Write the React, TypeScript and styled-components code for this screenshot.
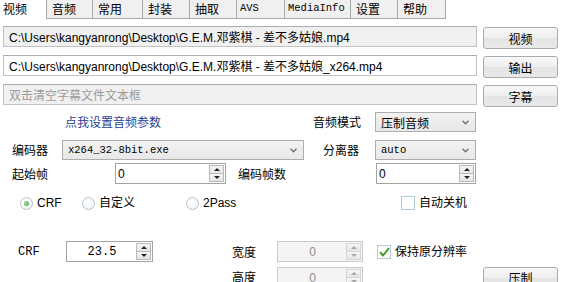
import React from "react";
import styled, { createGlobalStyle, css } from "styled-components";

const CJK = `"Noto Sans CJK SC", sans-serif`;
const SANS = `"Liberation Sans", "Noto Sans CJK SC", sans-serif`;
const MONO = `"Liberation Mono", "Noto Sans CJK SC", monospace`;

const Global = createGlobalStyle`
  html, body { margin: 0; padding: 0; background: #fff; }
  body { font-family: ${CJK}; font-size: 12px; color: #000; }
`;

const Window = styled.div`
  width: 568px;
  height: 282px;
  overflow: hidden;
  background: #fff;
  display: flex;
  flex-direction: column;
`;

const TabBar = styled.div`
  display: flex;
  height: 19px;
  flex: none;
`;

const Tab = styled.div<{ $w: number; $active?: boolean; $mono?: boolean; $last?: boolean }>`
  width: ${(p) => p.$w}px;
  height: 19px;
  box-sizing: border-box;
  display: flex;
  align-items: center;
  padding-left: ${(p) => (p.$active ? 3 : p.$mono ? 3 : 5)}px;
  padding-bottom: 1px;
  font-family: ${(p) => (p.$mono ? MONO : CJK)};
  font-size: ${(p) => (p.$mono ? "10.5px" : "12px")};
  line-height: 1;
  white-space: nowrap;
  ${(p) =>
    p.$active
      ? css`
          background: #fff;
        `
      : css`
          background: #f0f0f0;
          border-left: 1px solid #a9a9a9;
          border-bottom: 1px solid #a9a9a9;
          ${p.$last ? "border-right: 1px solid #a9a9a9;" : ""}
        `}
`;

const Row = styled.div<{ $mt: number; $h: number }>`
  display: flex;
  align-items: center;
  flex: none;
  margin-top: ${(p) => p.$mt}px;
  height: ${(p) => p.$h}px;
`;

const PathRow = styled(Row)`
  align-items: flex-start;
  padding-left: 3px;
`;

const Field = styled.div<{ $readonly?: boolean; $placeholder?: boolean }>`
  width: 474px;
  height: 21px;
  box-sizing: border-box;
  border: 1px solid #c2c2c2;
  border-top-color: #abadb3;
  background: ${(p) => (p.$readonly ? "#f0f0f0" : "#fff")};
  padding-left: 5px;
  display: flex;
  align-items: center;
  font-family: ${SANS};
  font-size: 12px;
  color: ${(p) => (p.$placeholder ? "#9b9b9b" : "#000")};
  white-space: nowrap;
  overflow: hidden;
`;

const Button = styled.div<{ $ml?: number }>`
  width: 75px;
  height: 22px;
  box-sizing: border-box;
  margin-left: ${(p) => p.$ml ?? 6}px;
  margin-top: 1px;
  border: 1px solid #acacac;
  border-radius: 3px;
  background: linear-gradient(#f8f8f8, #eeeeee 50%, #e4e4e4 51%, #e9e9e9);
  display: flex;
  align-items: center;
  justify-content: center;
  font-family: ${CJK};
  font-size: 12px;
  color: #000;
  flex: none;
`;

const Label = styled.div<{ $w: number; $ml?: number; $right?: boolean; $mono?: boolean }>`
  flex: none;
  width: ${(p) => p.$w}px;
  margin-left: ${(p) => p.$ml ?? 0}px;
  box-sizing: border-box;
  text-align: ${(p) => (p.$right ? "right" : "left")};
  padding-right: ${(p) => (p.$right ? 16 : 0)}px;
  font-family: ${(p) => (p.$mono ? MONO : CJK)};
  font-size: 12px;
  white-space: nowrap;
  line-height: 1;
`;

const LinkText = styled(Label)`
  color: #1f3f95;
`;

const SelectBox = styled.div<{ $w: number; $mono?: boolean }>`
  flex: none;
  width: ${(p) => p.$w}px;
  height: 20px;
  box-sizing: border-box;
  border: 1px solid #adadad;
  background: linear-gradient(#f2f2f2, #e8e8e8);
  display: flex;
  align-items: center;
  justify-content: space-between;
  padding: 0 6px 0 5px;
  font-family: ${(p) => (p.$mono ? MONO : CJK)};
  font-size: ${(p) => (p.$mono ? "10.5px" : "12px")};
  white-space: nowrap;
`;

const Chevron = () => (
  <svg width="7" height="5" viewBox="0 0 7 5">
    <path d="M0.5 0.8 L3.5 3.8 L6.5 0.8" fill="none" stroke="#707070" strokeWidth="1.3" />
  </svg>
);

const Spin = styled.div<{ $w: number; $mt?: number; $disabled?: boolean }>`
  flex: none;
  align-self: flex-start;
  margin-top: ${(p) => p.$mt ?? 0}px;
  width: ${(p) => p.$w}px;
  height: 21px;
  box-sizing: border-box;
  border: 1px solid ${(p) => (p.$disabled ? "#c9c9c9" : "#a3a3a3")};
  background: ${(p) => (p.$disabled ? "#f4f4f4" : "#fff")};
  display: flex;
  align-items: stretch;
  padding: 1px;
`;

const SpinValue = styled.div<{ $center?: boolean; $mono?: boolean; $disabled?: boolean }>`
  flex: 1;
  display: flex;
  align-items: center;
  justify-content: ${(p) => (p.$center ? "center" : "flex-start")};
  padding-left: ${(p) => (p.$center ? 0 : 1)}px;
  font-family: ${(p) => (p.$mono ? MONO : SANS)};
  font-size: 12px;
  color: ${(p) => (p.$disabled ? "#8d8d8d" : "#000")};
`;

const Arrows = styled.div`
  width: 15px;
  flex: none;
  display: flex;
  flex-direction: column;
`;

const ArrowBtn = styled.div<{ $down?: boolean; $disabled?: boolean }>`
  flex: 1;
  box-sizing: border-box;
  border: 1px solid ${(p) => (p.$disabled ? "#d6d6d6" : "#b9b9b9")};
  ${(p) => (p.$down ? "border-top: none;" : "")}
  background: linear-gradient(#f6f6f6, #e4e4e4);
  display: flex;
  align-items: center;
  justify-content: center;
  &::after {
    content: "";
    width: 0;
    height: 0;
    border-left: 3px solid transparent;
    border-right: 3px solid transparent;
    ${(p) =>
      p.$down
        ? `border-top: 3px solid ${p.$disabled ? "#a8a8a8" : "#222"};`
        : `border-bottom: 3px solid ${p.$disabled ? "#a8a8a8" : "#222"};`}
  }
`;

const SpinBox = ({
  w,
  value,
  center,
  mono,
  disabled,
  mt,
}: {
  w: number;
  value: string;
  center?: boolean;
  mono?: boolean;
  disabled?: boolean;
  mt?: number;
}) => (
  <Spin $w={w} $disabled={disabled} $mt={mt}>
    <SpinValue $center={center} $mono={mono} $disabled={disabled}>
      {value}
    </SpinValue>
    <Arrows>
      <ArrowBtn $disabled={disabled} />
      <ArrowBtn $down $disabled={disabled} />
    </Arrows>
  </Spin>
);

const Option = styled.div<{ $w?: number; $ml?: number }>`
  flex: none;
  display: flex;
  align-items: center;
  gap: 4px;
  width: ${(p) => (p.$w ? `${p.$w}px` : "auto")};
  margin-left: ${(p) => p.$ml ?? 0}px;
  font-family: ${SANS};
  font-size: 12px;
  white-space: nowrap;
  line-height: 1;
`;

const RadioCircle = styled.span<{ $on?: boolean }>`
  width: 13px;
  height: 13px;
  box-sizing: border-box;
  border-radius: 50%;
  border: 1px solid #b9c3cc;
  background: radial-gradient(circle at 40% 40%, #ffffff, #eef1f4);
  display: flex;
  align-items: center;
  justify-content: center;
  &::after {
    content: "";
    display: ${(p) => (p.$on ? "block" : "none")};
    width: 5px;
    height: 5px;
    border-radius: 50%;
    background: radial-gradient(circle at 40% 40%, #a8d7a0, #4f9d4a);
  }
`;

const CheckSquare = styled.span`
  width: 14px;
  height: 14px;
  box-sizing: border-box;
  border: 1px solid #b3cbd6;
  background: #fff;
  display: flex;
  align-items: center;
  justify-content: center;
`;

const CheckMark = () => (
  <svg width="11" height="10" viewBox="0 0 11 10">
    <path d="M1 5.2 L4 8.5 L10 1" fill="none" stroke="#3f9b25" strokeWidth="2" strokeLinejoin="round" />
  </svg>
);

const tabs: { label: string; w: number; mono?: boolean }[] = [
  { label: "音频", w: 46 },
  { label: "常用", w: 50 },
  { label: "封装", w: 47 },
  { label: "抽取", w: 47 },
  { label: "AVS", w: 48, mono: true },
  { label: "MediaInfo", w: 66, mono: true },
  { label: "设置", w: 47 },
  { label: "帮助", w: 49 },
];

export default function App() {
  return (
    <>
      <Global />
      <Window>
        <TabBar>
          <Tab $w={46} $active>
            视频
          </Tab>
          {tabs.map((t, i) => (
            <Tab key={t.label} $w={t.w} $mono={t.mono} $last={i === tabs.length - 1}>
              {t.label}
            </Tab>
          ))}
        </TabBar>

        <PathRow $mt={7} $h={22}>
          <Field $readonly>C:\Users\kangyanrong\Desktop\G.E.M.邓紫棋 - 差不多姑娘.mp4</Field>
          <Button>视频</Button>
        </PathRow>
        <PathRow $mt={7} $h={22}>
          <Field>C:\Users\kangyanrong\Desktop\G.E.M.邓紫棋 - 差不多姑娘_x264.mp4</Field>
          <Button>输出</Button>
        </PathRow>
        <PathRow $mt={7} $h={22}>
          <Field $readonly $placeholder>
            双击清空字幕文件文本框
          </Field>
          <Button>字幕</Button>
        </PathRow>

        <Row $mt={6} $h={20}>
          <LinkText $ml={65} $w={248}>
            点我设置音频参数
          </LinkText>
          <Label $w={62} $right>
            音频模式
          </Label>
          <SelectBox $w={101}>
            <span>压制音频</span>
            <Chevron />
          </SelectBox>
        </Row>

        <Row $mt={8} $h={20}>
          <Label $ml={12} $w={50}>
            编码器
          </Label>
          <SelectBox $w={242} $mono>
            <span>x264_32-8bit.exe</span>
            <Chevron />
          </SelectBox>
          <Label $w={71} $right>
            分离器
          </Label>
          <SelectBox $w={101} $mono>
            <span>auto</span>
            <Chevron />
          </SelectBox>
        </Row>

        <Row $mt={3} $h={21}>
          <Label $ml={12} $w={103}>
            起始帧
          </Label>
          <SpinBox w={111} value="0" />
          <Label $ml={12} $w={138}>
            编码帧数
          </Label>
          <SpinBox w={100} value="0" />
        </Row>

        <Row $mt={12} $h={14}>
          <Option $ml={20} $w={62}>
            <RadioCircle $on />
            CRF
          </Option>
          <Option $w={104}>
            <RadioCircle />
            自定义
          </Option>
          <Option $w={215}>
            <RadioCircle />
            2Pass
          </Option>
          <Option>
            <CheckSquare />
            自动关机
          </Option>
        </Row>

        <Row $mt={31} $h={21}>
          <Label $ml={18} $w={48} $mono>
            CRF
          </Label>
          <SpinBox w={87} value="23.5" center mono />
          <Label $ml={79} $w={45}>
            宽度
          </Label>
          <SpinBox w={86} value="0" center disabled />
          <Option $ml={14}>
            <CheckSquare>
              <CheckMark />
            </CheckSquare>
            保持原分辨率
          </Option>
        </Row>

        <Row $mt={4} $h={22}>
          <Label $ml={232} $w={45}>
            高度
          </Label>
          <SpinBox w={86} value="0" center disabled mt={1} />
          <Button $ml={120}>压制</Button>
        </Row>
      </Window>
    </>
  );
}
